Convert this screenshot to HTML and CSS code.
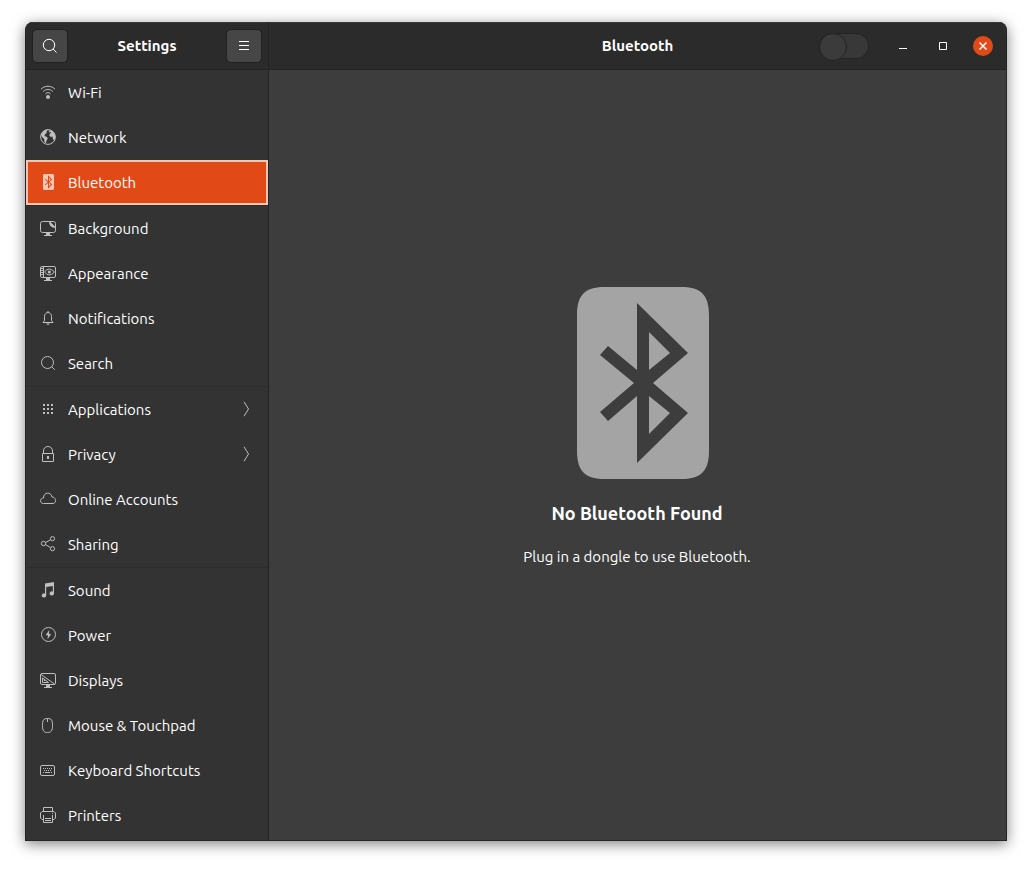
FILE: index.html
```html
<!DOCTYPE html>
<html lang="en">
<head>
<meta charset="utf-8">
<title>Settings</title>
<link rel="stylesheet" href="styles.css">
</head>
<body>
<div class="window">
  <aside class="sidebar">
    <header class="bar bar-side">
      <button class="tool" type="button" aria-label="Search settings">
        <svg class="icon" viewBox="0 0 16 16"><circle cx="7" cy="7" r="5.700"/><path d="M11 11l3.500 3.500"/></svg>
      </button>
      <h2 class="title">Settings</h2>
      <button class="tool" type="button" aria-label="Menu">
        <svg class="icon" viewBox="0 0 16 16"><path d="M3 3.500h10M3 7.500h10M3 11.500h10"/></svg>
      </button>
    </header>
    <nav class="panels">
      <div class="group">
        <a class="row" href="#"><svg class="icon" viewBox="0 0 16 16"><path d="M1 5.200c4-4 10-4 14 0M3.200 7.500c3-2.700 6.600-2.700 9.600 0M5.400 9.800c1.700-1.500 3.500-1.500 5.200 0"/><circle class="solid" cx="8" cy="13" r="2"/></svg><span>Wi-Fi</span></a>
        <a class="row" href="#"><svg class="icon" viewBox="0 0 16 16"><circle cx="8" cy="8" r="7.400"/><path class="solid" d="M1 5.500L3.200 2.300 6.500.8l1.200 1-1.500 1 .6 1.200-2 1.200.4 1.200-1.300.4 2.600.9 1.400 1.500-1.300 2.200-.7 2.900-1.500-1.400-.2-2.900-2.200-1.900zM9.500 1l3.500 1.500 2 3.500v4l-1 1.600-1-1.500-.5-2.600-1.700.4-1.500-1.500.5-1.700 1.200-.9-.4-1-1 .6-.9-1 .9-1z"/></svg><span>Network</span></a>
        <a class="row selected" href="#" aria-current="page"><svg class="icon" viewBox="0 0 192 192"><path class="solid" fill-rule="evenodd" d="M36 20C36 6 40 0 56 0h92c14 0 20 6 20 20v152c0 14-6 20-20 20H56c-16 0-20-6-20-20zM96 16v67L67 59l-8 9 34 28-34 29 8 9 29-25v67l51-50-35-30 35-30zm12 29l21 21-21 17zm0 64l21 17-21 21z"/></svg><span>Bluetooth</span></a>
      </div>
      <div class="group">
        <a class="row" href="#"><svg class="icon" viewBox="0 0 16 16"><rect x=".5" y="1.500" width="15" height="11" rx="2"/><path class="solid" d="M9 1.500l1.500.5 4.500 4.500.5 1.500q-6.500 0-6.500-6.500zM6 13h4v2h2v1H4v-1h2z"/></svg><span>Background</span></a>
        <a class="row" href="#"><svg class="icon" viewBox="0 0 16 16"><rect x=".5" y="1.500" width="15" height="11" rx="1.500"/><path d="M3.500 2v10M1 3.500h2M1 5.500h2M1 7.500h2M1 9.500h2M4.500 7q4.500-6 10 0-5.500 6-10 0z"/><circle class="solid" cx="9.300" cy="7" r="1.600"/><path class="solid" d="M6 13h4v2h2v1H4v-1h2z"/></svg><span>Appearance</span></a>
        <a class="row" href="#"><svg class="icon" viewBox="0 0 16 16"><path d="M3 12.500h10l-1.500-2V6.500c0-5.300-7-5.300-7 0v4zM8 1v1.500"/><path class="solid" d="M6 13.500h4q-2 2.500-4 0z"/></svg><span>Notifications</span></a>
        <a class="row" href="#"><svg class="icon" viewBox="0 0 16 16"><circle cx="7.500" cy="7.500" r="6"/><path d="M11.700 11.700l3 3"/></svg><span>Search</span></a>
      </div>
      <div class="group">
        <a class="row" href="#"><svg class="icon" viewBox="0 0 16 16"><path class="solid" d="M3 3h2v2H3zM7 3h2v2H7zM11 3h2v2h-2zM3 7h2v2H3zM7 7h2v2H7zM11 7h2v2h-2zM3 11h2v2H3zM7 11h2v2H7zM11 11h2v2h-2z"/></svg><span>Applications</span><svg class="icon chevron" viewBox="0 0 16 16"><path d="M6 .8l4.500 7.200L6 15.200"/></svg></a>
        <a class="row" href="#"><svg class="icon" viewBox="0 0 16 16"><path d="M2.500 7.500h11v8h-11zM3.500 7V5C3.500-1 12.500-1 12.500 5v2"/><path class="solid" d="M7 10h2v3H7z"/></svg><span>Privacy</span><svg class="icon chevron" viewBox="0 0 16 16"><path d="M6 .8l4.500 7.200L6 15.200"/></svg></a>
        <a class="row" href="#"><svg class="icon" viewBox="0 0 16 16"><path d="M3.500 12.500C-.5 12.500-.3 7 3.500 7 3.500 1 11 .3 12 6c4.500 0 4.500 6.500 1 6.500z"/></svg><span>Online Accounts</span></a>
        <a class="row" href="#"><svg class="icon" viewBox="0 0 16 16"><circle cx="3.500" cy="7.500" r="2.200"/><circle cx="12.500" cy="2.700" r="2.100"/><circle cx="12.500" cy="12.700" r="2.100"/><path d="M5.500 6.500l5-2.700M5.500 8.600l5 3"/></svg><span>Sharing</span></a>
      </div>
      <div class="group">
        <a class="row" href="#"><svg class="icon" viewBox="0 0 16 16"><path class="solid" d="M5 1.500L14 0v11.500a2.200 2 0 1 1-1.200-1.800V4L6.200 5v8.500A2.200 2 0 1 1 5 11.700z"/></svg><span>Sound</span></a>
        <a class="row" href="#"><svg class="icon" viewBox="0 0 16 16"><circle cx="8.500" cy="7.500" r="7"/><path class="solid" d="M9.300 3L5.700 8.200h2.300l-.5 4.100 3.700-5.300H8.900z"/></svg><span>Power</span></a>
        <a class="row" href="#"><svg class="icon" viewBox="0 0 16 16"><rect x=".5" y="1.500" width="15" height="11" rx="1.500"/><path d="M1 2.500L14.500 12M2.500 6v4.500h6zM4.500 8v1"/><path class="solid" d="M6 13h4v2h2v1H4v-1h2z"/></svg><span>Displays</span></a>
        <a class="row" href="#"><svg class="icon" viewBox="0 0 16 16"><path d="M7.500 1.500C3.500 1.500 2.500 3 2.500 8.500s1.500 7 5 7 5-1.500 5-7-1-7-5-7zM7.500 1.500V5"/></svg><span>Mouse &amp; Touchpad</span></a>
        <a class="row" href="#"><svg class="icon" viewBox="0 0 16 16"><rect x=".5" y="3.500" width="14" height="10" rx="1.500"/><path d="M3 6.500h1m1 0h1m1 0h1m1 0h1m1 0h1M4 8.500h1m1 0h1m1 0h1m1 0h1M3 10.500h1m1 0h5m1 0h1"/></svg><span>Keyboard Shortcuts</span></a>
        <a class="row" href="#"><svg class="icon" viewBox="0 0 16 16"><path d="M3.500 4V.5h9V4M3 12.500H2L.500 11V6L2 4.500h12L15.500 6v5L14 12.500h-1M3.500 8v7.500h9V8M5 11.500h6M5 13.500h6M12 6.500h1"/></svg><span>Printers</span></a>
      </div>
    </nav>
  </aside>
  <main class="content">
    <header class="bar bar-main">
      <h1 class="title">Bluetooth</h1>
      <div class="controls">
        <input class="switch" type="checkbox" role="switch" aria-label="Bluetooth" disabled>
        <button class="control" type="button" aria-label="Minimize"><svg class="icon" viewBox="0 0 16 16"><path d="M4 10.500h8"/></svg></button>
        <button class="control" type="button" aria-label="Maximize"><svg class="icon" viewBox="0 0 16 16"><path d="M4.500 4.500h7v7h-7z"/></svg></button>
        <button class="control close" type="button" aria-label="Close"><svg class="icon" viewBox="0 0 16 16"><path d="M4.500 4.500l7 7M11.500 4.500l-7 7"/></svg></button>
      </div>
    </header>
    <section class="empty">
      <svg class="emblem" viewBox="0 0 192 192"><path fill-rule="evenodd" d="M36 28C36 6 46 0 64 0h76c18 0 28 6 28 28v136c0 22-10 28-28 28H64c-18 0-28-6-28-28zM96 16v67L67 59l-8 9 34 28-34 29 8 9 29-25v67l51-50-35-30 35-30zm12 29l21 21-21 17zm0 64l21 17-21 21z"/></svg>
      <h2 class="heading">No Bluetooth Found</h2>
      <p class="hint">Plug in a dongle to use Bluetooth.</p>
    </section>
  </main>
</div>
</body>
</html>
```
FILE: styles.css
```css
* {
  box-sizing: border-box;
}

body {
  margin: 0;
  padding: 22px 25px 28px;
  min-height: 100vh;
  display: flex;
  background: #fff;
  color: #fff;
  font-family: Ubuntu, "Noto Sans", sans-serif;
  font-size: 15px;
  line-height: 20px;
}

h1, h2, p {
  margin: 0;
}

.window {
  flex: 1;
  display: flex;
  border: 1px solid #252525;
  border-top: 0;
  border-radius: 8px 8px 0 0;
  overflow: hidden;
  background: #3d3d3d;
  box-shadow: 0 3px 14px rgba(0, 0, 0, 0.5);
}

.sidebar {
  width: 243px;
  flex: none;
  border-right: 1px solid #232323;
  background: #333;
}

.content {
  flex: 1;
  display: flex;
  flex-direction: column;
}

.bar {
  height: 48px;
  align-items: center;
  background: #2b2b2b;
  border-bottom: 1px solid #232323;
  box-shadow: inset 0 1px #383838;
}

.bar-side {
  display: flex;
  justify-content: space-between;
  padding: 0 6px;
}

.bar-main {
  display: grid;
  grid-template-columns: 1fr auto 1fr;
  padding: 0 11px;
}

.bar-main .title {
  grid-column: 2;
}

.title {
  font-size: 15px;
  font-weight: 700;
}

.icon {
  display: block;
  width: 16px;
  height: 16px;
  flex: none;
  fill: none;
  stroke: currentColor;
}

.solid {
  fill: currentColor;
  stroke: none;
}

.tool {
  width: 36px;
  height: 34px;
  padding: 0;
  display: grid;
  place-items: center;
  color: #fff;
  background: #464646;
  border: 1px solid #212121;
  border-radius: 5px;
}

.group + .group {
  border-top: 1px solid #2c2c2c;
}

.row {
  height: 45px;
  padding: 0 14px;
  display: flex;
  align-items: center;
  gap: 12px;
  color: #fff;
  text-decoration: none;
}

.row .icon {
  margin-bottom: 1px;
  color: #bfbfbf;
}

.row .chevron {
  margin-left: auto;
}

.row.selected {
  padding: 0 12px;
  background: #e14a17;
  border: 2px solid #f6c6b4;
}

.row.selected .icon {
  color: #f6c6b4;
}

.controls {
  display: flex;
  justify-content: flex-end;
  align-items: center;
  gap: 16px;
}

.switch {
  appearance: none;
  width: 50px;
  height: 26px;
  margin: 0 6px 0 0;
  background: #383838;
  border-radius: 13px;
  box-shadow: inset 0 0 0 1px #232323;
}

.switch::before {
  content: "";
  display: block;
  width: 26px;
  height: 26px;
  background: #3b3b3b;
  border: 1px solid #232323;
  border-radius: 50%;
}

.control {
  width: 24px;
  height: 24px;
  padding: 0;
  display: grid;
  place-items: center;
  color: #fff;
  background: none;
  border: 0;
}

.close .icon {
  width: 20px;
  height: 20px;
  padding: 2px;
  background: #e14a17;
  border-radius: 50%;
  stroke-width: 1.500;
}

.empty {
  flex: 1;
  display: flex;
  flex-direction: column;
  align-items: center;
  justify-content: center;
  padding: 0 1px 56px 0;
}

.emblem {
  width: 192px;
  height: 192px;
  fill: #a4a4a4;
}

.heading {
  margin-top: 22px;
  font-size: 18px;
  line-height: 24px;
}

.hint {
  margin-top: 22px;
}
```
